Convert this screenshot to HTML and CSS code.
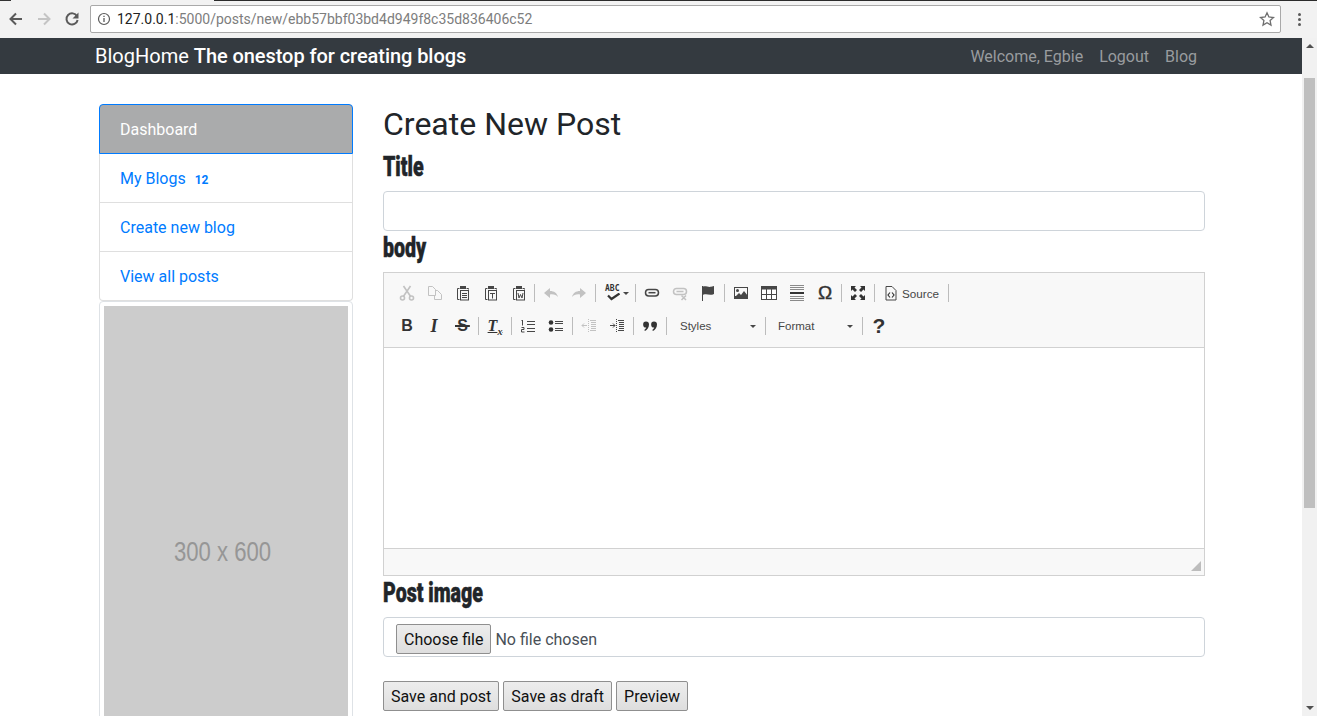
FILE: index.html
```html
<!DOCTYPE html>
<html lang="en">
<head>
    <meta charset="UTF-8">
    <title>Create New Post</title>
    <link rel="stylesheet" href="styles.css">
</head>
<body>
<div class="tabline"><span class="tabline-a"></span><span class="tabline-b"></span><span class="tabline-c"></span></div>
<div class="chrome">
    <svg class="nav-icon" width="16" height="16" viewBox="0 0 16 16"><path d="M14 8H3M8 2.500L2.500 8 8 13.500" fill="none" stroke="#5a5a5a" stroke-width="2"/></svg>
    <svg class="nav-icon" width="16" height="16" viewBox="0 0 16 16"><path d="M2 8h11M8 2.500L13.500 8 8 13.500" fill="none" stroke="#c4c4c4" stroke-width="2"/></svg>
    <svg class="nav-icon" width="16" height="16" viewBox="0 0 16 16"><path d="M13 5.200A5.600 5.600 0 1 0 13.600 9" fill="none" stroke="#5a5a5a" stroke-width="2"/><path d="M14.500 1.500v6h-6z" fill="#5a5a5a"/></svg>
    <div class="omnibox">
        <svg class="info-icon" width="14" height="14" viewBox="0 0 14 14"><circle cx="7" cy="7" r="5.500" fill="none" stroke="#5a5a5a" stroke-width="1.200"/><path d="M7 6v4M7 3.700v1.200" stroke="#5a5a5a" stroke-width="1.300"/></svg>
        <span class="url"><span class="url-host">127.0.0.1</span>:5000/posts/new/ebb57bbf03bd4d949f8c35d836406c52</span>
        <svg class="star-icon" width="16" height="16" viewBox="0 0 16 16"><path d="M8 1.800l1.900 4.200 4.600.5-3.400 3.100.9 4.500L8 11.800l-4 2.300.9-4.500L1.500 6.500l4.600-.5z" fill="none" stroke="#6e6e6e" stroke-width="1.300"/></svg>
    </div>
    <div class="menu-dots"><i></i><i></i><i></i></div>
</div>

<div class="viewport">
    <div class="content">
        <nav class="navbar">
            <div class="brand">BlogHome <strong>The onestop for creating blogs</strong></div>
            <div class="nav-links">
                <a>Welcome, Egbie</a>
                <a>Logout</a>
                <a>Blog</a>
            </div>
        </nav>

        <div class="page">
            <aside class="sidebar">
                <ul class="list-group">
                    <li class="list-item active">Dashboard</li>
                    <li class="list-item">My Blogs <span class="badge">12</span></li>
                    <li class="list-item">Create new blog</li>
                    <li class="list-item">View all posts</li>
                </ul>
                <div class="thumb">
                    <div class="holder"><span class="holder-text">300 x 600</span></div>
                </div>
            </aside>

            <main class="main">
                <h2 class="page-title">Create New Post</h2>
                <label class="field-label">Title</label>
                <div class="text-input"></div>
                <label class="field-label">body</label>

                <div class="editor">
                    <div class="toolbar">
                        <div class="tool-row">
                            <span class="btn-icon off"><svg width="16" height="16" viewBox="0 0 16 16"><g fill="none" stroke="#474747" stroke-width="1.600"><circle cx="3.500" cy="13" r="2"/><circle cx="12.500" cy="13" r="2"/><path d="M4.500 11.300L11.500 1M11.500 11.300L4.500 1"/></g></svg></span>
                            <span class="btn-icon off"><svg width="16" height="16" viewBox="0 0 16 16"><g fill="none" stroke="#474747"><path d="M1.500 1.500h4l3 3v6h-7z"/><path d="M8.500 5.500h2l4 4v5h-7v-4"/></g></svg></span>
                            <span class="btn-icon"><svg width="16" height="16" viewBox="0 0 16 16"><g fill="none" stroke="#474747"><path d="M4.500 3.500h-2v11h2"/><path d="M11.500 3.500h2v1"/><rect x="5.500" y="5.500" width="8" height="9.500"/><path d="M7 8.500h5M7 10.500h5M7 12.500h5"/></g><rect x="5" y="1" width="6" height="3" fill="#474747"/></svg></span>
                            <span class="btn-icon"><svg width="16" height="16" viewBox="0 0 16 16"><g fill="none" stroke="#474747"><path d="M4.500 3.500h-2v11h2"/><path d="M11.500 3.500h2v1"/><rect x="5.500" y="5.500" width="8" height="9.500"/><path d="M7 8.500h5M9.500 8.500v5"/></g><rect x="5" y="1" width="6" height="3" fill="#474747"/></svg></span>
                            <span class="btn-icon"><svg width="16" height="16" viewBox="0 0 16 16"><g fill="none" stroke="#474747"><path d="M4.500 3.500h-2v11h2"/><path d="M11.500 3.500h2v1"/><rect x="5.500" y="5.500" width="8" height="9.500"/><path d="M7 8l1 5 1.500-3.500L11 13l1-5"/></g><rect x="5" y="1" width="6" height="3" fill="#474747"/></svg></span>
                            <span class="sep sep-first"></span>
                            <span class="btn-icon off"><svg width="16" height="16" viewBox="0 0 16 16"><path d="M1 8l6-5v3c4 0 7 2 8 6-2-2-4-3-8-2.500V13z" fill="#474747"/></svg></span>
                            <span class="btn-icon off"><svg width="16" height="16" viewBox="0 0 16 16"><path d="M15 8L9 3v3c-4 0-7 2-8 6 2-2 4-3 8-2.500V13z" fill="#474747"/></svg></span>
                            <span class="sep"></span>
                            <span class="btn-spell">
                                <span class="spell-mark"><span class="spell-text">ABC</span><svg width="16" height="8" viewBox="0 0 16 8"><path d="M3 2.500l3.500 3.500L14.500 0.500" fill="none" stroke="#333" stroke-width="2.200"/></svg></span>
                                <span class="caret"></span>
                            </span>
                            <span class="sep"></span>
                            <span class="btn-icon"><svg width="16" height="16" viewBox="0 0 16 16"><g fill="none" stroke="#474747" stroke-width="1.500"><rect x="1.500" y="4.500" width="13" height="6.500" rx="3.200"/><path d="M4.500 7.700h7"/></g></svg></span>
                            <span class="btn-icon off"><svg width="16" height="16" viewBox="0 0 16 16"><g fill="none" stroke="#474747" stroke-width="1.500"><rect x="1.500" y="3.500" width="13" height="6" rx="3"/><path d="M4.500 6.500h7"/><path d="M9.500 10.500l4.500 4.500M14 10.500L9.500 15"/></g></svg></span>
                            <span class="btn-icon"><svg width="16" height="16" viewBox="0 0 16 16"><path d="M2.500 1v15" stroke="#474747"/><path d="M3 1.500c3-1 5 1 8 .3 1.500-.3 3-.8 3-.8v8c-3 1.500-6 .5-8 .3-1.500-.1-3 .5-3 .5z" fill="#474747"/></svg></span>
                            <span class="sep"></span>
                            <span class="btn-icon"><svg width="16" height="16" viewBox="0 0 16 16"><rect x="1" y="2" width="14" height="12" fill="#474747"/><rect x="2" y="3" width="12" height="8" fill="#f8f8f8"/><circle cx="4.500" cy="5.500" r="1.500" fill="#474747"/><path d="M2 12l4-4 2 2 3-4 4 5v3H2z" fill="#474747"/></svg></span>
                            <span class="btn-icon"><svg width="16" height="16" viewBox="0 0 16 16"><rect x="0.500" y="1.500" width="15" height="13" fill="#fff" stroke="#474747"/><rect x="0.500" y="1.500" width="15" height="3" fill="#474747"/><path d="M5.500 4v10M10.500 4v10M1 9.500h14" stroke="#474747"/></svg></span>
                            <span class="btn-icon"><svg width="16" height="16" viewBox="0 0 16 16"><path d="M1 .5h14M1 2.500h14M1 4.500h14M1 11.500h14M1 13.500h14M1 15.500h14" stroke="#8a8a8a"/><path d="M1 8h14" stroke="#333" stroke-width="2"/></svg></span>
                            <span class="btn-icon"><span class="glyph omega">Ω</span></span>
                            <span class="sep"></span>
                            <span class="btn-icon"><svg width="16" height="16" viewBox="0 0 16 16"><path d="M1 1h5L4.500 2.500 7 5 5 7 2.500 4.500 1 6zM15 1v5l-1.500-1.500L11 7 9 5l2.500-2.500L10 1zM1 15v-5l1.500 1.500L5 9l2 2-2.500 2.500L6 15zM15 15h-5l1.500-1.500L9 11l2-2 2.500 2.500L15 10z" fill="#333"/></svg></span>
                            <span class="sep"></span>
                            <span class="btn-source">
                                <svg width="16" height="16" viewBox="0 0 16 16"><path d="M3 1.500h6l4 4v9.500H3z" fill="none" stroke="#474747"/><path d="M7 7.500L5 10l2 2.500M9 7.500l2 2.500-2 2.500" fill="none" stroke="#333" stroke-width="1.200"/></svg>
                                <span>Source</span>
                            </span>
                            <span class="sep"></span>
                        </div>
                        <div class="tool-row">
                            <span class="btn-icon"><span class="glyph bold">B</span></span>
                            <span class="btn-icon"><span class="glyph italic">I</span></span>
                            <span class="btn-icon"><span class="glyph strike">S</span></span>
                            <span class="sep sep-first"></span>
                            <span class="btn-icon"><span class="glyph clear">T<sub>x</sub></span></span>
                            <span class="sep"></span>
                            <span class="btn-icon"><svg width="16" height="16" viewBox="0 0 16 16"><path d="M7 3.500h8M7 6.500h8M7 10.500h8M7 13.500h8" stroke="#474747"/><path d="M2.500 2v5.500M1.500 2.500h1.500M1.500 9.500h2.500v2H1.500v2.500H4.500" fill="none" stroke="#474747"/></svg></span>
                            <span class="btn-icon"><svg width="16" height="16" viewBox="0 0 16 16"><circle cx="3" cy="4.500" r="2.300" fill="#333"/><circle cx="3" cy="11.500" r="2.300" fill="#333"/><path d="M7 3.500h8M7 5.500h8M7 10.500h8M7 12.500h8" stroke="#474747"/></svg></span>
                            <span class="sep"></span>
                            <span class="btn-icon off"><svg width="16" height="16" viewBox="0 0 16 16"><path d="M9 2.500h6M10 4.500h5M10 6.500h5M10 8.500h5M10 10.500h5M9 12.500h6" stroke="#474747"/><path d="M7.500 1v13" stroke="#474747" stroke-dasharray="1 1"/><path d="M1 7.500h5M1 7.500l2-2M1 7.500l2 2" fill="none" stroke="#474747"/></svg></span>
                            <span class="btn-icon"><svg width="16" height="16" viewBox="0 0 16 16"><path d="M9 2.500h6M10 4.500h5M10 6.500h5M10 8.500h5M10 10.500h5M9 12.500h6" stroke="#474747"/><path d="M7.500 1v13" stroke="#474747" stroke-dasharray="1 1"/><path d="M1 7.500h5M6 7.500l-2-2M6 7.500l-2 2" fill="none" stroke="#474747"/></svg></span>
                            <span class="sep"></span>
                            <span class="btn-icon"><svg width="16" height="16" viewBox="0 0 16 16"><path d="M4 3.500a3 3 0 0 1 3 3c0 3-2 5.500-4 6.500l-.7-1c1-.7 1.700-1.500 2-2.500A3 3 0 1 1 4 3.500zM12 3.500a3 3 0 0 1 3 3c0 3-2 5.500-4 6.500l-.7-1c1-.7 1.700-1.500 2-2.500A3 3 0 1 1 12 3.500z" fill="#333"/></svg></span>
                            <span class="sep"></span>
                            <span class="combo combo-styles"><span>Styles</span><span class="caret"></span></span>
                            <span class="sep"></span>
                            <span class="combo combo-format"><span>Format</span><span class="caret"></span></span>
                            <span class="sep"></span>
                            <span class="btn-icon"><span class="glyph help">?</span></span>
                        </div>
                    </div>
                    <div class="edit-area"></div>
                    <div class="edit-footer"><span class="grip"></span></div>
                </div>

                <label class="field-label">Post image</label>
                <div class="file-box">
                    <button class="plain-btn" type="button">Choose file</button>
                    <span class="file-name">No file chosen</span>
                </div>
                <div class="actions">
                    <button class="plain-btn" type="button">Save and post</button>
                    <button class="plain-btn" type="button">Save as draft</button>
                    <button class="plain-btn" type="button">Preview</button>
                </div>
            </main>
        </div>
    </div>

    <div class="scrollbar">
        <span class="arrow-up"></span>
        <span class="scroll-thumb"></span>
        <span class="arrow-down"></span>
    </div>
</div>
</body>
</html>
```

FILE: styles.css
```css
html, body {
    margin: 0;
    height: 100%;
    overflow: hidden;
}
body {
    display: flex;
    flex-direction: column;
    font-family: Roboto, "Liberation Sans", sans-serif;
    font-size: 16px;
    color: #212529;
    background: #fff;
}

/* browser top */
.tabline {
    display: flex;
    height: 1px;
    flex: none;
}
.tabline-a {
    width: 11px;
    background: #333;
}
.tabline-b {
    width: 203px;
    background: #f2f2f2;
}
.tabline-c {
    flex: 1;
    background: #2b2b2b;
}
.chrome {
    display: flex;
    align-items: center;
    height: 37px;
    flex: none;
    background: #f2f2f2;
    box-sizing: border-box;
    padding: 0 0 1px 8px;
}
.nav-icon {
    margin-right: 12px;
}
.nav-icon + .nav-icon + .nav-icon {
    margin-right: 10px;
}
.omnibox {
    display: flex;
    align-items: center;
    width: 1191px;
    height: 28px;
    box-sizing: border-box;
    padding: 0 5px 0 6px;
    background: #fff;
    border: 1px solid #a9a9a9;
    border-radius: 2px;
}
.info-icon {
    margin-right: 6px;
}
.url {
    flex: 1;
    font-size: 14px;
    color: #7d7d7d;
}
.url-host {
    color: #222;
}
.menu-dots {
    display: flex;
    flex-direction: column;
    gap: 2px;
    margin-left: 17px;
}
.menu-dots i {
    width: 3px;
    height: 3px;
    border-radius: 50%;
    background: #5a5a5a;
}

/* page + scrollbar */
.viewport {
    display: flex;
    flex: 1;
    min-height: 0;
}
.content {
    flex: 1;
    min-width: 0;
    overflow: hidden;
}
.scrollbar {
    display: flex;
    flex-direction: column;
    align-items: center;
    width: 15px;
    flex: none;
    background: #f1f1f1;
}
.arrow-up {
    margin-top: 6px;
    border: 4px solid transparent;
    border-top: 0;
    border-bottom: 4px solid #505050;
}
.scroll-thumb {
    width: 11px;
    height: 430px;
    margin-top: 30px;
    background: #bfbfbf;
}
.arrow-down {
    margin-top: auto;
    margin-bottom: 6px;
    border: 4px solid transparent;
    border-bottom: 0;
    border-top: 4px solid #505050;
}

.navbar {
    display: flex;
    align-items: center;
    justify-content: space-between;
    height: 36px;
    padding: 0 105px 0 95px;
    background: #343a40;
}
.brand {
    font-size: 20px;
    color: #fff;
}
.brand strong {
    font-weight: 500;
    letter-spacing: -0.06px;
}
.nav-links {
    display: flex;
    gap: 16px;
    color: #999c9f;
}

.page {
    display: flex;
    gap: 30px;
    padding-left: 99px;
}

/* left column */
.sidebar {
    width: 254px;
    flex: none;
    padding-top: 30px;
}
.list-group {
    margin: 0;
    padding: 0;
    list-style: none;
}
.list-item {
    height: 47px;
    line-height: 48px;
    padding: 1px 20px 0;
    border: 1px solid #dfdfdf;
    border-top: 0;
    color: #007bff;
    background: #fff;
}
.list-item:last-child {
    border-radius: 0 0 4px 4px;
}
.list-item.active {
    border: 1px solid #007bff;
    border-radius: 4px 4px 0 0;
    background: #aaabac;
    color: #fff;
}
.badge {
    margin-left: 5px;
    font-size: 12px;
    font-weight: 700;
}
.thumb {
    padding: 4px;
    border: 1px solid #dee2e6;
    border-radius: 4px;
}
.holder {
    height: 488px;
    box-sizing: border-box;
    padding-right: 7px;
    line-height: 492px;
    text-align: center;
    background: #ccc;
    color: #969696;
    font-family: "Liberation Sans", sans-serif;
    font-size: 28px;
}
/* the placeholder text is a condensed face */
.holder-text {
    display: inline-block;
    transform: scaleX(0.79);
}

/* right column */
.main {
    width: 822px;
    flex: none;
    padding-top: 31px;
}
.page-title {
    margin: 0 0 8px;
    font-size: 32px;
    font-weight: 400;
    line-height: 38px;
}
.field-label {
    display: block;
    height: 30px;
    margin-bottom: 10px;
    font-family: Impact, Roboto, "Liberation Sans", sans-serif;
    font-size: 28px;
    font-weight: 900;
    line-height: 31px;
    color: #212529;
    -webkit-text-stroke: 0.5px #212529;
    transform: scaleX(0.7);
    transform-origin: left center;
}
.text-input {
    height: 38px;
    margin-bottom: 1px;
    background: #fff;
    border: 1px solid #ced4da;
    border-radius: 4px;
}

/* rich text editor */
.editor {
    border: 1px solid #d1d1d1;
    margin-bottom: 1px;
}
.toolbar {
    height: 75px;
    box-sizing: border-box;
    padding: 4px 0 0 9px;
    background: #f8f8f8;
    border-bottom: 1px solid #d1d1d1;
}
.tool-row {
    display: flex;
    align-items: center;
    height: 32px;
    margin-bottom: 1px;
}
.btn-icon {
    display: flex;
    align-items: center;
    justify-content: center;
    width: 28px;
    height: 28px;
    flex: none;
}
.off {
    opacity: 0.3;
}
.sep {
    width: 1px;
    height: 18px;
    flex: none;
    margin: 0 2px;
    background: #bcbcbc;
}
.sep-first {
    margin-left: 1px;
}
.btn-spell {
    display: flex;
    align-items: center;
    width: 35px;
    flex: none;
    box-sizing: border-box;
    padding-left: 7px;
}
.spell-mark {
    display: flex;
    flex-direction: column;
    width: 16px;
}
.spell-text {
    font-family: "DejaVu Sans Mono", monospace;
    font-size: 8px;
    font-weight: 700;
    line-height: 8px;
    color: #333;
}
.caret {
    display: inline-block;
    margin-left: 2px;
    border: 3px solid transparent;
    border-bottom: 0;
    border-top: 3px solid #474747;
}
.btn-source {
    display: flex;
    align-items: center;
    gap: 3px;
    width: 69px;
    flex: none;
    box-sizing: border-box;
    padding-left: 6px;
    font-family: "Liberation Sans", sans-serif;
    font-size: 11.700px;
    color: #474747;
}
.glyph {
    color: #333;
    font-family: "Liberation Sans", sans-serif;
    line-height: 16px;
}
.bold {
    font-size: 16px;
    font-weight: 700;
}
.italic {
    margin-right: 2px;
    font-family: "Liberation Serif", serif;
    font-size: 18px;
    font-weight: 700;
    font-style: italic;
}
.strike {
    padding: 0 2px;
    margin-right: 1px;
    font-size: 16px;
    font-weight: 700;
    background: linear-gradient(#333, #333) center / 100% 2px no-repeat;
}
.clear {
    font-family: "Liberation Serif", serif;
    font-size: 16px;
    font-weight: 700;
    font-style: italic;
    text-decoration: underline;
}
.clear sub {
    font-size: 10px;
    line-height: 0;
}
.omega {
    font-size: 19px;
    -webkit-text-stroke: 0.4px #333;
}
.help {
    font-size: 21px;
    font-weight: 700;
}
.combo {
    display: flex;
    align-items: center;
    justify-content: space-between;
    flex: none;
    box-sizing: border-box;
    height: 24px;
    padding: 0 7px 0 10px;
    font-family: "Liberation Sans", sans-serif;
    font-size: 11.500px;
    color: #474747;
}
.combo-styles {
    width: 94px;
    padding-left: 11px;
}
.combo-format {
    width: 92px;
    padding-left: 10px;
}
.edit-area {
    height: 200px;
    background: #fff;
}
.edit-footer {
    display: flex;
    justify-content: flex-end;
    align-items: flex-end;
    height: 27px;
    box-sizing: border-box;
    padding: 0 3px 4px 0;
    background: #f8f8f8;
    border-top: 1px solid #d1d1d1;
}
.grip {
    border-left: 10px solid transparent;
    border-bottom: 10px solid #bdbdbd;
}

.file-box {
    display: flex;
    align-items: center;
    gap: 4px;
    height: 38px;
    padding-left: 12px;
    background: #fff;
    border: 1px solid #ced4da;
    border-radius: 4px;
    color: #495057;
}
.plain-btn {
    height: 30px;
    padding: 0 7px;
    font-family: Roboto, "Liberation Sans", sans-serif;
    font-size: 16px;
    color: #111;
    background: linear-gradient(#ededed, #dedede);
    border: 1px solid #8f8f8f;
    border-radius: 2px;
}
.file-box .plain-btn {
    margin-top: 4px;
}
.file-name {
    margin-top: 4px;
}
.actions {
    display: flex;
    gap: 4px;
    margin-top: 24px;
}
```
